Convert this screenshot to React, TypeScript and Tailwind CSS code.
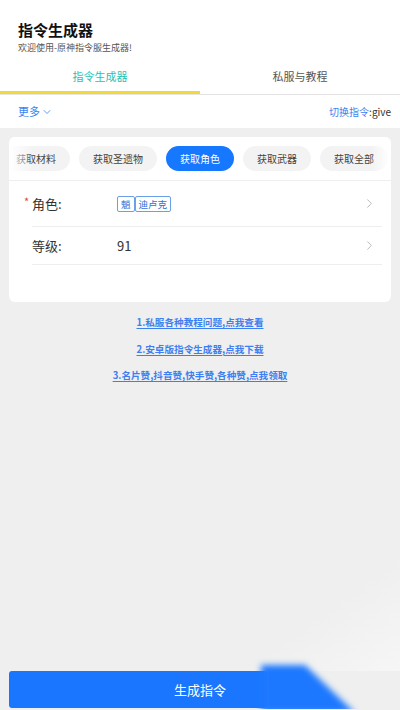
import { ChevronDown, ChevronRight } from "lucide-react";

const chips = ["获取材料", "获取圣遗物", "获取角色", "获取武器", "获取全部"];
const links = [
  "1.私服各种教程问题,点我查看",
  "2.安卓版指令生成器,点我下载",
  "3.名片赞,抖音赞,快手赞,各种赞,点我领取",
];

export default function App() {
  return (
    <div
      className="w-[400px] h-[710px] flex flex-col bg-[#efefef] overflow-hidden"
      style={{ fontFamily: '"Noto Sans CJK SC", "Noto Sans", sans-serif' }}
    >
      <div className="bg-white">
        <div className="px-[18px] pt-[20px]">
          <h1 className="text-[15px] font-bold leading-[20px] text-[#111]">指令生成器</h1>
          <p className="text-[9px] leading-[14px] text-[#555] mt-[1px]">欢迎使用-原神指令服生成器!</p>
        </div>
        <div className="flex pt-[9px] border-b border-[#e4e4e4]">
          <div className="flex-1 flex flex-col items-center">
            <span className="text-[11px] leading-[24px] text-[#27c2b4]">指令生成器</span>
            <div className="w-full h-[3px] bg-[#f1d93a] mt-[3px]" />
          </div>
          <div className="flex-1 flex flex-col items-center">
            <span className="text-[11px] leading-[24px] text-[#555]">私服与教程</span>
            <div className="w-full h-[3px] mt-[3px]" />
          </div>
        </div>
        <div className="flex items-center justify-between pl-[18px] pr-[9px] h-[33px]">
          <span className="flex items-center text-[11px] text-[#3c82ef]">
            更多
            <ChevronDown className="w-[12px] h-[12px] ml-[1px]" strokeWidth={1.6} />
          </span>
          <span className="text-[10px] text-[#3c82ef]">
            切换指令<span className="text-[#333]">:give</span>
          </span>
        </div>
      </div>

      <div className="mx-[9px] mt-[9px] bg-white rounded-[6px] h-[165px] overflow-hidden">
        <div className="relative border-b border-[#eeeeee] h-[44px] flex items-center overflow-hidden">
          <div className="flex gap-[9px] ml-[-7px]">
            {chips.map((c) => (
              <span
                key={c}
                className={
                  c === "获取角色"
                    ? "shrink-0 h-[25px] px-[14px] rounded-full bg-[#1677ff] text-white text-[10px] leading-[25px]"
                    : "shrink-0 h-[25px] px-[14px] rounded-full bg-[#f3f3f3] text-[#444] text-[10px] leading-[25px]"
                }
              >
                {c}
              </span>
            ))}
          </div>
          <div className="absolute left-0 top-0 h-full w-[24px] bg-gradient-to-r from-white to-transparent" />
          <div className="absolute right-0 top-0 h-full w-[20px] bg-gradient-to-l from-white to-transparent" />
        </div>
        <div className="pl-[23px] pr-[9px]">
          <div className="flex items-center h-[46px] border-b border-[#eeeeee]">
            <span className="w-[85px] text-[13px] text-[#333] relative">
              <span className="absolute left-[-8px] top-[-1px] text-[#ee3b3b] text-[11px]">*</span>
              角色:
            </span>
            <div className="flex-1 flex">
              <span className="border border-[#6aa0ea] rounded-[2px] text-[9.5px] leading-[14px] px-[3px] text-[#2f73d8]">魈</span>
              <span className="border border-[#6aa0ea] rounded-[2px] text-[9.5px] leading-[14px] px-[3px] text-[#2f73d8]">迪卢克</span>
            </div>
            <ChevronRight className="w-[15px] h-[15px] text-[#aaa] mr-[5px]" strokeWidth={1.3} />
          </div>
          <div className="flex items-center h-[38px] border-b border-[#eeeeee]">
            <span className="w-[85px] text-[13px] text-[#333]">等级:</span>
            <span className="flex-1 text-[13px] text-[#333]">91</span>
            <ChevronRight className="w-[15px] h-[15px] text-[#aaa] mr-[5px]" strokeWidth={1.3} />
          </div>
        </div>
      </div>

      <div className="flex flex-col items-center mt-[12px] gap-[10px]">
        {links.map((l) => (
          <a key={l} className="text-[9.6px] leading-[16.5px] font-bold text-[#3d7ff0] underline underline-offset-2">
            {l}
          </a>
        ))}
      </div>

      <div className="flex-1 bg-gradient-to-br from-[#efefef] from-80% to-[#f6f6f6]" />

      <div className="relative h-[37px] mx-[9px] mb-[2px] flex items-center justify-center">
        <svg className="absolute left-0 top-[-14px]" width="382" height="52" viewBox="0 0 382 52">
          <defs>
            <filter id="b" x="-20%" y="-20%" width="140%" height="140%">
              <feGaussianBlur stdDeviation="3" />
            </filter>
          </defs>
          <rect x="0" y="14" width="258" height="37" rx="3" fill="#1a76ff" />
          <polygon points="252,8 296,8 346,56 252,56" fill="#1f78ff" filter="url(#b)" />
        </svg>
        <span className="relative text-white text-[13px]">生成指令</span>
      </div>
    </div>
  );
}
